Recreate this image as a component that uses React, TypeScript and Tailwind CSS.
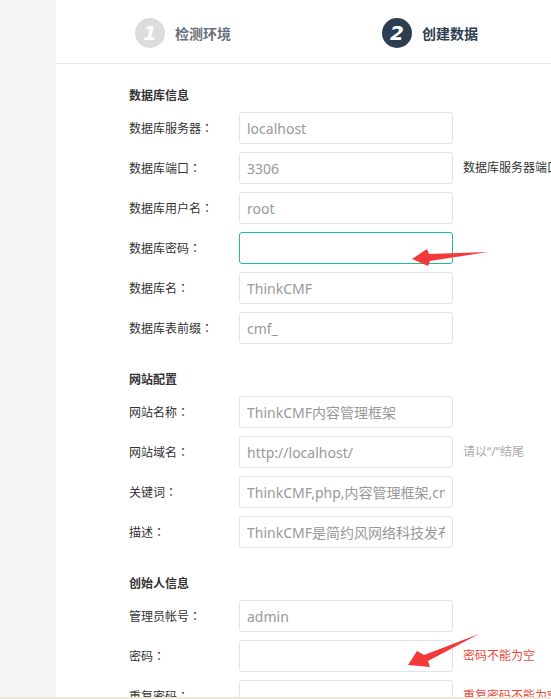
import React from 'react';

type Field = {
  label: string;
  value: string;
  focused?: boolean;
  help?: string;
  helpTone?: 'dark' | 'muted' | 'error';
};

const sections: { title: string; fields: Field[] }[] = [
  {
    title: "数据库信息",
    fields: [
      { label: "数据库服务器", value: "localhost" },
      { label: "数据库端口", value: "3306", help: "数据库服务器端口，一般为3306", helpTone: "dark" },
      { label: "数据库用户名", value: "root" },
      { label: "数据库密码", value: "", focused: true },
      { label: "数据库名", value: "ThinkCMF" },
      { label: "数据库表前缀", value: "cmf_" }
    ]
  },
  {
    title: "网站配置",
    fields: [
      { label: "网站名称", value: "ThinkCMF内容管理框架" },
      { label: "网站域名", value: "http://localhost/", help: "请以“/”结尾", helpTone: "muted" },
      { label: "关键词", value: "ThinkCMF,php,内容管理框架,cmf,cms" },
      { label: "描述", value: "ThinkCMF是简约风网络科技发布的一款用于快速开发的内容管理框架" }
    ]
  },
  {
    title: "创始人信息",
    fields: [
      { label: "管理员帐号", value: "admin" },
      { label: "密码", value: "", help: "密码不能为空", helpTone: "error" },
      { label: "重复密码", value: "", help: "重复密码不能为空", helpTone: "error" }
    ]
  }
];

const helpClass = {
  dark: "text-[#333]",
  muted: "text-[#aaa]",
  error: "text-[#e74c3c]"
};

const Step = ({ num, text, active }: { num: string; text: string; active?: boolean }) => (
  <div className="flex items-center gap-[10px]">
    <div
      className={`w-[30px] h-[30px] rounded-full flex items-center justify-center text-white text-[20px] font-bold italic font-['DejaVu_Sans',sans-serif] ${
        active ? 'bg-[#2c3e50]' : 'bg-[#dcdcdc]'
      }`}
    >
      {num}
    </div>
    <span className={`text-[14px] font-bold ${active ? 'text-[#2c3e50]' : 'text-[#6b7079]'}`}>{text}</span>
  </div>
);

export default function App() {
  return (
    <div className="w-full h-[699px] flex flex-col overflow-hidden bg-white font-['Noto_Sans','Noto_Sans_CJK_SC',sans-serif]">
      <div className="flex flex-1 min-h-0 relative">
        <div className="w-[56px] shrink-0 bg-[#f3f3f3] bg-[radial-gradient(#f8f8f8_1px,transparent_1px)] bg-[size:4px_4px]" />

        <div className="flex-1 min-w-0 overflow-hidden">
          <div className="h-[64px] border-b border-[#e5e5e5] flex items-center pl-[79px] pt-[3px]">
            <div className="w-[247px]">
              <Step num="1" text="检测环境" />
            </div>
            <Step num="2" text="创建数据" active />
          </div>

          <div className="pl-[73px] pt-[22px]">
            {sections.map((section, index) => (
              <div key={index} className={index > 0 ? 'mt-[26px]' : ''}>
                <h3 className="text-[12px] leading-[20px] font-bold text-[#333] mb-[6px]">{section.title}</h3>
                <div className="flex flex-col gap-[8px]">
                  {section.fields.map((field, fieldIndex) => (
                    <div key={fieldIndex} className="flex items-center h-[32px]">
                      <label className="w-[110px] shrink-0 text-[12px] text-[#333] font-['Noto_Sans_CJK_SC',sans-serif]">
                        {field.label}
                        <span className="font-['Noto_Sans_CJK_JP',sans-serif]">：</span>
                      </label>
                      <input
                        readOnly
                        value={field.value}
                        className={`w-[214px] h-[32px] shrink-0 rounded-[3px] border px-[7px] text-[14px] text-[#999] bg-white outline-none ${
                          field.focused ? 'border-[#1abc9c]' : 'border-[#dce4ec]'
                        }`}
                      />
                      {field.help && (
                        <span className={`ml-[10px] text-[12px] whitespace-nowrap ${helpClass[field.helpTone || 'dark']}`}>
                          {field.help}
                        </span>
                      )}
                    </div>
                  ))}
                </div>
              </div>
            ))}
          </div>
        </div>

        {/* annotation arrows */}
        <svg className="absolute inset-0 pointer-events-none" width="551" height="697" viewBox="0 0 551 697">
          <polygon points="488,252 429,254 427,249 412,259 428,266 430,261" fill="#f23a3a" />
          <polygon points="479,634 424,655 417,651 408,665 430,667 428,661" fill="#f23a3a" />
        </svg>
      </div>
      <div className="h-[2px] shrink-0 bg-[#ece9d8]" />
    </div>
  );
}
